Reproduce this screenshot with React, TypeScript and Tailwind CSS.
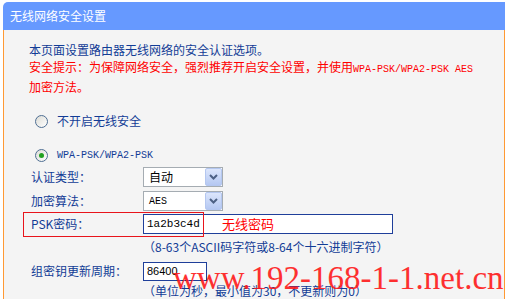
import React from 'react';

const Radio: React.FC<{ checked?: boolean }> = ({ checked }) => (
  <span className="relative w-[13px] h-[13px] rounded-full border border-[#4f6f93] bg-gradient-to-br from-[#dcdcd6] to-white flex items-center justify-center">
    {checked && <span className="w-[5px] h-[5px] rounded-full bg-[#21a121]" />}
  </span>
);

const Select: React.FC<{ value: string; mono?: boolean }> = ({ value, mono }) => (
  <div className="w-[80px] h-[20px] border border-[#a5acb2] bg-white flex items-center">
    <span
      className={
        mono
          ? "flex-1 pl-[5px] font-['Liberation_Mono',monospace] text-[10px] text-black"
          : 'flex-1 pl-[5px] text-black'
      }
    >
      {value}
    </span>
    <div className="w-[17px] h-[18px] rounded-[2px] border border-[#b4c7f0] bg-gradient-to-b from-[#dce6fc] to-[#b5c8f2] flex items-center justify-center">
      <svg width="9" height="6" viewBox="0 0 9 6">
        <path d="M1 1 L4.5 4.5 L8 1" fill="none" stroke="#4d6185" strokeWidth="2" />
      </svg>
    </div>
  </div>
);

export default function App() {
  return (
    <div className="relative w-[507px] h-[299px] bg-white overflow-hidden font-['Noto_Sans_CJK_SC',sans-serif] text-[12px]">
      <div className="ml-[3px] mt-[2px] w-[502px] h-[28px] bg-[#6699ff] rounded-tl-[5px] pl-[7px] flex items-center text-white">
        无线网络安全设置
      </div>

      <div className="ml-[3px] w-[502px] h-[269px] bg-[#f4f4f4] border-x border-[#ff9933] pl-[25px] pt-[12px] text-[#123c96]">
        <p className="leading-[16px]">本页面设置路由器无线网络的安全认证选项。</p>
        <p className="leading-[17px] text-[#ff0000]">
          安全提示：为保障网络安全，强烈推荐开启安全设置，并使用
          <span className="font-['Liberation_Mono',monospace] text-[10px]">WPA-PSK/WPA2-PSK AES</span>
          <br />
          加密方法。
        </p>

        <div className="mt-[16px] h-[20px] flex items-center gap-[9px] pl-[6px]">
          <Radio />
          <span>不开启无线安全</span>
        </div>

        <div className="mt-[14px] h-[20px] flex items-center gap-[9px] pl-[6px]">
          <Radio checked />
          <span className="font-['Liberation_Mono',monospace] text-[10px]">WPA-PSK/WPA2-PSK</span>
        </div>

        <div className="mt-[2px] h-[20px] flex items-center">
          <span className="w-[114px] pl-[2px]">认证类型：</span>
          <Select value="自动" />
        </div>

        <div className="mt-[4px] h-[20px] flex items-center">
          <span className="w-[114px] pl-[2px]">加密算法：</span>
          <Select value="AES" mono />
        </div>

        <div className="relative mt-[3px] h-[20px] flex items-center">
          <span className="w-[114px] pl-[2px]">PSK密码：</span>
          <div className="w-[250px] h-[20px] border border-[#1f3f9a] bg-white flex items-center">
            <span className="w-[78px] pl-[3px] font-['Liberation_Mono',monospace] text-[11px] text-black">1a2b3c4d</span>
            <span className="text-[13px] text-[#ff0000]">无线密码</span>
          </div>
          <div className="absolute left-[-6px] top-[-2px] w-[181px] h-[25px] border border-[#e8141b] pointer-events-none" />
        </div>

        <p className="mt-[5px] leading-[16px] pl-[114px]">（8-63个ASCII码字符或8-64个十六进制字符）</p>

        <div className="mt-[6px] h-[20px] flex items-center">
          <span className="w-[114px] pl-[2px]">组密钥更新周期：</span>
          <div className="w-[64px] h-[19px] border border-[#1f3f9a] bg-white flex items-center pl-[3px] font-['Liberation_Sans',sans-serif] text-[11px] text-black">
            86400
          </div>
        </div>

        <p className="mt-[2px] leading-[16px] pl-[114px]">（单位为秒，最小值为30，不更新则为0）</p>
      </div>

      <div className="absolute left-[173px] top-[262px] leading-[33px] text-[33px] font-['Liberation_Serif',serif] text-[#ff1a1a] opacity-90 pointer-events-none whitespace-nowrap">
        www.192-168-1-1.net.cn
      </div>
    </div>
  );
}
